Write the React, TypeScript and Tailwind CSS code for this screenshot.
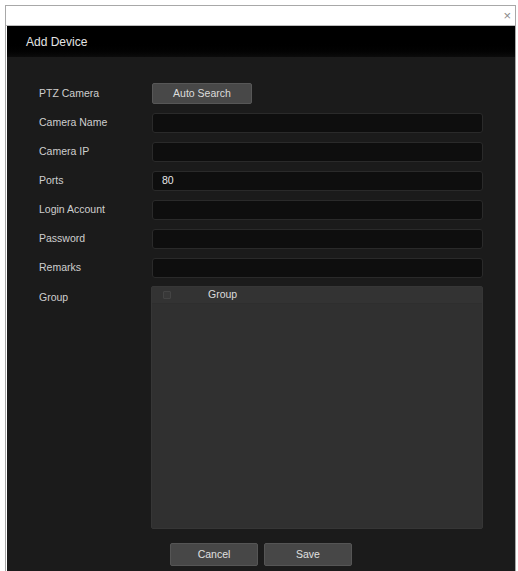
import React from "react";

const font = { fontFamily: '"Liberation Sans", Arial, sans-serif' };

function Field({ label, value }: { label: string; value?: string }) {
  return (
    <div className="flex h-[29px] items-center">
      <div className="w-[113px] text-[10.5px] text-[#cfcfcf]">{label}</div>
      <div className="flex h-[20px] w-[331px] items-center rounded-[3px] border border-[#2a2a2a] bg-[#0e0e0e] pl-[9px] text-[10.5px] text-[#e6e6e6]">
        {value}
      </div>
    </div>
  );
}

export default function App() {
  return (
    <div className="h-[571px] w-[518px] bg-white pl-[5px] pr-[2px] pt-[5px]" style={font}>
      <div className="flex h-full flex-col border-x border-t border-[#a8a8a8]">
        <div className="flex h-[20px] items-center justify-end border-b border-[#bdbdbd] bg-white pr-[4px]">
          <span className="text-[13px] leading-none text-[#8a8a8a]">×</span>
        </div>
        <div className="ml-[1px] flex flex-1 flex-col bg-[#1b1b1b]">
          <div className="flex h-[31px] items-center bg-gradient-to-b from-black via-black to-[#0c0c0c] pl-[19px] text-[12px] text-[#e4e4e4]">
            Add Device
          </div>
          <div className="flex flex-col pl-[32px] pt-[22px]">
            <div className="flex h-[29px] items-center">
              <div className="w-[113px] text-[10.5px] text-[#cfcfcf]">PTZ Camera</div>
              <div className="flex h-[21px] w-[100px] items-center justify-center rounded-[2px] border border-[#575757] bg-[#484848] text-[10.5px] text-[#dcdcdc]">
                Auto Search
              </div>
            </div>
            <Field label="Camera Name" />
            <Field label="Camera IP" />
            <Field label="Ports" value="80" />
            <Field label="Login Account" />
            <Field label="Password" />
            <Field label="Remarks" />
            <div className="mt-[4px] flex">
              <div className="w-[112px] pt-[4px] text-[10.5px] text-[#cfcfcf]">Group</div>
              <div className="h-[243px] w-[332px] rounded-[2px] border border-[#363636] bg-[#303030]">
                <div className="flex h-[17px] items-center border-b border-[#2e2e2e] bg-[#333333]">
                  <div className="ml-[11px] h-[8px] w-[8px] rounded-[1px] border border-[#444444] bg-[#383838]" />
                  <div className="ml-[37px] text-[10.5px] text-[#dcdcdc]">Group</div>
                </div>
              </div>
            </div>
            <div className="mt-[14px] flex gap-[6px] pl-[131px]">
              <div className="flex h-[23px] w-[88px] items-center justify-center rounded-[2px] border border-[#555555] bg-[#474747] text-[10.5px] text-[#e0e0e0]">
                Cancel
              </div>
              <div className="flex h-[23px] w-[88px] items-center justify-center rounded-[2px] border border-[#555555] bg-[#474747] text-[10.5px] text-[#e0e0e0]">
                Save
              </div>
            </div>
          </div>
        </div>
      </div>
    </div>
  );
}
